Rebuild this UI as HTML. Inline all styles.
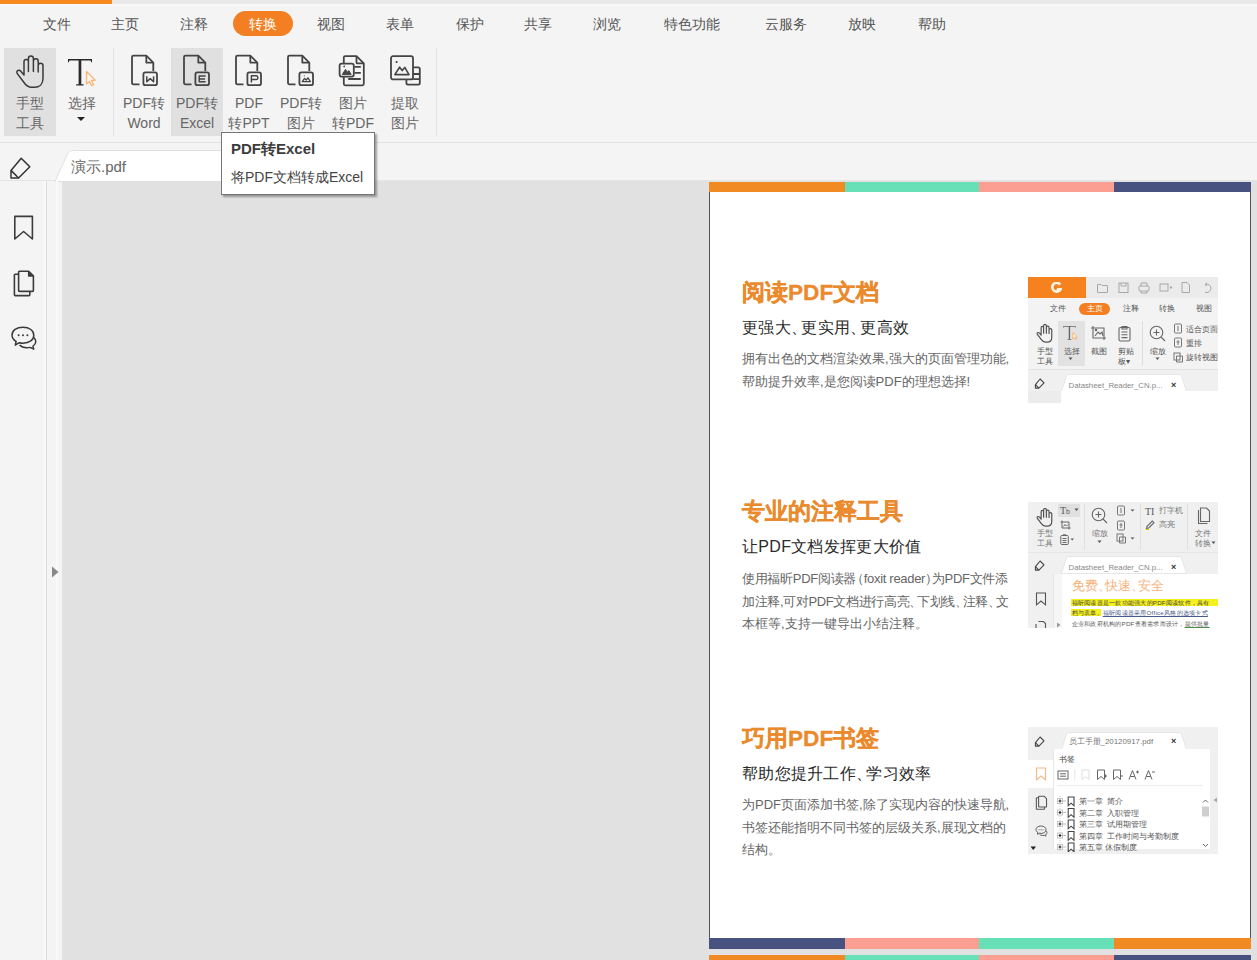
<!DOCTYPE html>
<html><head><meta charset="utf-8">
<style>
*{margin:0;padding:0;box-sizing:border-box}
html,body{width:1257px;height:960px;overflow:hidden;background:#f4f4f4;font-family:"Liberation Sans",sans-serif;color:#444}
.a{position:absolute}
#topstrip{left:0;top:0;width:1257px;height:4px;background:#e8e8e8}
#topband{left:0;top:4px;width:1257px;height:2px;background:#f7f7f7}
#topor{left:0;top:0;width:112px;height:4px;background:#f78a1e}
.menu{top:14.5px;font-size:14.4px;line-height:18px;color:#555;white-space:nowrap}
#pill{left:233px;top:11px;width:60px;height:25px;border-radius:13px;background:#f37f22}
.btn{top:48px;height:88px}
.hl{background:#e0e0e0}
.lbl{font-size:14px;line-height:20px;color:#666;text-align:center;white-space:nowrap}
.sep{width:1px;background:#e2e2e2}
#docarea{left:62px;top:181px;width:1195px;height:779px;background:#e1e1e1}
#page{left:709px;top:182px;width:542px;height:767px;background:#fff;border-left:1px solid #555;border-right:1px solid #555}
.bar{height:10px}
.h1{font-size:22.6px;font-weight:bold;-webkit-text-stroke:0.3px #ea8a2c;color:#ea8a2c;line-height:26px;white-space:nowrap}
.h2{font-size:16px;letter-spacing:0.3px;color:#2a2a2a;line-height:20px;white-space:nowrap}
.mt{font-size:7.5px;line-height:10px;color:#555;white-space:nowrap}
.dn{margin-right:-6px}
.dn2{margin-left:-5px;margin-right:0}
.dn3{margin-right:-6px}
.dn4{margin-right:-5px}
.p{font-size:13px;color:#666;line-height:22.5px;white-space:nowrap}
</style></head><body>
<div class="a" id="topstrip"></div>
<div class="a" id="topband"></div>
<div class="a" id="topor"></div>
<!-- menu -->
<div class="a" id="pill"></div>
<div class="a menu" style="left:43px">文件</div>
<div class="a menu" style="left:111px">主页</div>
<div class="a menu" style="left:180px">注释</div>
<div class="a menu" style="left:249px;color:#fff">转换</div>
<div class="a menu" style="left:317px">视图</div>
<div class="a menu" style="left:386px">表单</div>
<div class="a menu" style="left:456px">保护</div>
<div class="a menu" style="left:524px">共享</div>
<div class="a menu" style="left:593px">浏览</div>
<div class="a menu" style="left:664px">特色功能</div>
<div class="a menu" style="left:765px">云服务</div>
<div class="a menu" style="left:848px">放映</div>
<div class="a menu" style="left:918px">帮助</div>

<!-- ribbon -->
<div class="a btn hl" style="left:4px;width:52px"></div>
<div class="a btn hl" style="left:171px;width:52px"></div>
<div class="a sep" style="left:113px;top:48px;height:88px"></div>
<div class="a sep" style="left:436px;top:48px;height:88px"></div>
<div class="a" style="left:0;top:142px;width:1257px;height:1px;background:#e2e2e2"></div>

<div class="a lbl" style="left:4px;top:93px;width:52px">手型<br>工具</div>
<div class="a lbl" style="left:56px;top:93px;width:52px">选择</div>
<div class="a lbl" style="left:118px;top:93px;width:52px">PDF转<br>Word</div>
<div class="a lbl" style="left:171px;top:93px;width:52px">PDF转<br>Excel</div>
<div class="a lbl" style="left:223px;top:93px;width:52px">PDF<br>转PPT</div>
<div class="a lbl" style="left:275px;top:93px;width:52px">PDF转<br>图片</div>
<div class="a lbl" style="left:327px;top:93px;width:52px">图片<br>转PDF</div>
<div class="a lbl" style="left:379px;top:93px;width:52px">提取<br>图片</div>


<div class="a" style="left:46px;top:181px;width:1px;height:779px;background:#dcdcdc"></div>
<div class="a" style="left:47px;top:181px;width:15px;height:779px;background:#f4f4f4"></div>
<div class="a" id="docarea"></div>
<!-- ribbon icons -->
<svg class="a" style="left:15px;top:55px" width="30" height="34" viewBox="0 0 30 34" fill="none" stroke="#3a3a3a" stroke-width="1.5" stroke-linecap="round" stroke-linejoin="round">
<path d="M9 19.5V6.6a2.2 2.2 0 0 1 4.4 0V16.5M13.4 6.6V3.4a2.5 2.5 0 0 1 5 0V16.5M18.4 6.2a2.4 2.4 0 0 1 4.8 0V17M23.2 10.6a2.4 2.4 0 0 1 4.8 0V23.5C28 29 24.5 32.3 19.5 32.3H16.5C12.8 32.3 11 30.5 9 27.5L2.3 18.6A2.1 2.1 0 0 1 5.6 16L9 20"/>
</svg>
<svg class="a" style="left:66px;top:57px" width="34" height="31" viewBox="0 0 34 31">
<path d="M2 2H26V5.2H25.2L24.6 3.6H15.3V27.3H17.6V28.5H10.2V27.3H12.6V3.6H3.4L2.8 5.2H2Z" fill="#2b2b2b"/>
<path d="M20.5 14.5L20.5 27L23.4 24.4L25.6 28.6L27.6 27.6L25.5 23.5L29.3 23.2Z" fill="#fff6ea" stroke="#f6b77c" stroke-width="1.3" stroke-linejoin="round"/>
</svg>
<svg class="a" style="left:130px;top:54px" width="30" height="33" viewBox="0 0 30 33" fill="none" stroke="#444" stroke-width="1.8" stroke-linejoin="round">
<path d="M9.5 30.3H3.5Q2 30.3 2 28.8V3Q2 1.6 3.5 1.6H16.3L23.3 8.6V17"/><path d="M16.3 1.8V8.6H23.2"/>
<rect x="13.4" y="18.4" width="13.6" height="12.8" rx="2"/>
<path d="M16.8 22.2V27.8L20.2 24.6L23.6 27.8V22.2" stroke-width="1.5"/>
</svg>
<svg class="a" style="left:182px;top:54px" width="30" height="33" viewBox="0 0 30 33" fill="none" stroke="#444" stroke-width="1.8" stroke-linejoin="round">
<path d="M9.5 30.3H3.5Q2 30.3 2 28.8V3Q2 1.6 3.5 1.6H16.3L23.3 8.6V17"/><path d="M16.3 1.8V8.6H23.2"/>
<rect x="13.4" y="18.4" width="13.6" height="12.8" rx="2"/>
<path d="M23.6 22H17.2V27.8H23.6M17.2 24.9H23" stroke-width="1.5"/>
</svg>
<svg class="a" style="left:234px;top:54px" width="30" height="33" viewBox="0 0 30 33" fill="none" stroke="#444" stroke-width="1.8" stroke-linejoin="round">
<path d="M9.5 30.3H3.5Q2 30.3 2 28.8V3Q2 1.6 3.5 1.6H16.3L23.3 8.6V17"/><path d="M16.3 1.8V8.6H23.2"/>
<rect x="13.4" y="18.4" width="13.6" height="12.8" rx="2"/>
<path d="M17.4 28.4V21.8H22.2Q23.8 21.8 23.8 23.5V24Q23.8 25.6 22.2 25.6H17.4" stroke-width="1.5"/>
</svg>
<svg class="a" style="left:286px;top:54px" width="30" height="33" viewBox="0 0 30 33" fill="none" stroke="#444" stroke-width="1.8" stroke-linejoin="round">
<path d="M9.5 30.3H3.5Q2 30.3 2 28.8V3Q2 1.6 3.5 1.6H16.3L23.3 8.6V17"/><path d="M16.3 1.8V8.6H23.2"/>
<rect x="13.4" y="18.4" width="13.6" height="12.8" rx="2"/>
<path d="M16.2 27.6L18.6 24.4L20.2 26L22 23.8L24.4 27.6Z" stroke-width="1.3"/><circle cx="18.3" cy="21.8" r=".6" fill="#4a4a4a" stroke="none"/>
</svg>
<svg class="a" style="left:337px;top:54px" width="32" height="33" viewBox="0 0 32 33" fill="none" stroke="#444" stroke-width="1.8" stroke-linejoin="round">
<path d="M6.8 9.5V3.6Q6.8 2.2 8.2 2.2H19.5L26.8 9.4V29.8Q26.8 31.3 25.4 31.3H8.2Q6.8 31.3 6.8 29.8V22.8"/><path d="M19.5 2.4V8.4Q19.5 9.4 20.5 9.4H26.6"/>
<rect x="2.6" y="9.6" width="14.2" height="13" rx="2"/>
<path d="M17.5 12.8H23.8M17.5 18.8H23.8M11.2 25H23.8"/>
<path d="M5.3 20.4L8.5 15.4L10.4 18.2L11.8 16.6L14.2 20.4Z" fill="#4a4a4a" stroke-width="1"/><circle cx="7.2" cy="12.4" r=".9" fill="#4a4a4a" stroke="none"/>
</svg>
<svg class="a" style="left:388px;top:54px" width="34" height="33" viewBox="0 0 34 33" fill="none" stroke="#444" stroke-width="1.8" stroke-linejoin="round">
<rect x="18.4" y="13.4" width="13.4" height="17.2" rx="1.6"/>
<path d="M25.2 20H31.6M25.2 25.2H31.6"/>
<rect x="3" y="2.2" width="22" height="23.2" rx="2" fill="#f3f3f3"/>
<path d="M6.8 20.6L11.6 13.2L14.2 16.6L16.8 13.4L21 20.6Z" stroke-width="1.6"/><circle cx="8.6" cy="8" r="1.1" fill="#444" stroke="none"/>
</svg>
<svg class="a" style="left:76px;top:116px" width="10" height="6" viewBox="0 0 10 6"><path d="M1 1H9L5 5Z" fill="#222"/></svg>

<!-- tab bar -->
<svg class="a" style="left:9px;top:156px" width="24" height="23" viewBox="0 0 24 23" fill="none" stroke="#333" stroke-width="1.5" stroke-linejoin="round">
<path d="M12.2 2.2L20.8 10.8L9.6 22H2V14.4Z"/><path d="M2 14.4L9.6 22"/>
</svg>
<div class="a" style="left:0;top:180px;width:1257px;height:1px;background:#e4e4e4"></div>
<svg class="a" style="left:54px;top:150px" width="260" height="32" viewBox="0 0 260 32">
<path d="M1 31.5L14 3Q15.5 0.5 18.5 0.5H240Q243 0.5 244.5 3L257 31.5Z" fill="#fff" stroke="#e0e0e0" stroke-width="1"/>
</svg>
<div class="a" style="left:71px;top:157px;font-size:15px;line-height:20px;color:#666;white-space:nowrap">演示.pdf</div>

<!-- sidebar icons -->
<svg class="a" style="left:12px;top:214px" width="24" height="28" viewBox="0 0 24 28" fill="none" stroke="#3c3c3c" stroke-width="1.6" stroke-linejoin="round">
<path d="M2.8 2.4H20.4V25L11.6 17.5L2.8 25Z"/>
</svg>
<svg class="a" style="left:12px;top:269px" width="24" height="28" viewBox="0 0 24 28" fill="none" stroke="#3c3c3c" stroke-width="1.6" stroke-linejoin="round">
<path d="M6.5 5.2H3.2Q2.4 5.2 2.4 6V25.8Q2.4 26.6 3.2 26.6H17Q17.8 26.6 17.8 25.8V22.6"/>
<path d="M7.6 2.2H16.7L21.4 6.9V21.6Q21.4 22.4 20.6 22.4H7.4Q6.6 22.4 6.6 21.6V3Q6.6 2.2 7.4 2.2Z"/><path d="M16.7 2.4V6.9H21.2" fill="#3c3c3c"/>
</svg>
<svg class="a" style="left:10px;top:325px" width="28" height="26" viewBox="0 0 28 26" fill="none" stroke="#3c3c3c" stroke-width="1.5" stroke-linejoin="round">
<path d="M13 2.2C19.5 2.2 23.8 5.6 23.8 10.2C23.8 14.8 19.5 18.2 13 18.2C11.6 18.2 10.3 18 9.2 17.7L5.3 20.2L6.1 16.3C3.4 14.8 2 12.6 2 10.2C2 5.6 6.5 2.2 13 2.2Z"/>
<path d="M23.5 12.3C25 13.5 25.8 15 25.8 16.6C25.8 18.4 24.8 20 23 21.2L23.7 24.2L20.2 22.4C19.1 22.7 17.9 22.8 16.6 22.8C13.6 22.8 11 21.7 9.6 20.1"/>
<circle cx="8.6" cy="10.3" r="1" fill="#3c3c3c" stroke="none"/><circle cx="13" cy="10.3" r="1" fill="#3c3c3c" stroke="none"/><circle cx="17.4" cy="10.3" r="1" fill="#3c3c3c" stroke="none"/>
</svg>
<div class="a" style="left:43px;top:181px;width:3px;height:779px;background:#f8f8f8"></div><div class="a" style="left:56px;top:181px;width:2px;height:779px;background:#f9f9f9"></div>
<svg class="a" style="left:50px;top:565px" width="10" height="14" viewBox="0 0 10 14"><path d="M2 1.5L8.5 7L2 12.5Z" fill="#888"/></svg>

<!-- sidebar -->

<!-- page -->
<div class="a" id="page"></div>
<div class="a bar" style="left:709px;top:182px;width:136px;background:#f28a24"></div>
<div class="a bar" style="left:845px;top:182px;width:134px;background:#67e0b8"></div>
<div class="a bar" style="left:979px;top:182px;width:135px;background:#fa9f92"></div>
<div class="a bar" style="left:1114px;top:182px;width:137px;background:#475281"></div>

<div class="a bar" style="left:709px;top:938px;width:136px;height:11px;background:#475281"></div>
<div class="a bar" style="left:845px;top:938px;width:134px;height:11px;background:#fa9f92"></div>
<div class="a bar" style="left:979px;top:938px;width:135px;height:11px;background:#67e0b8"></div>
<div class="a bar" style="left:1114px;top:938px;width:137px;height:11px;background:#f28a24"></div>

<div class="a" style="left:709px;top:955px;width:542px;height:5px;background:#fff;border-left:1px solid #555;border-right:1px solid #555"></div>
<div class="a bar" style="left:709px;top:955px;width:136px;background:#f28a24"></div>
<div class="a bar" style="left:845px;top:955px;width:134px;background:#67e0b8"></div>
<div class="a bar" style="left:979px;top:955px;width:135px;background:#fa9f92"></div>
<div class="a bar" style="left:1114px;top:955px;width:137px;background:#475281"></div>

<div class="a h1" style="left:742px;top:280px">阅读PDF文档</div>
<div class="a h2" style="left:742px;top:318px">更强大<span class="dn">、</span>更实用<span class="dn">、</span>更高效</div>
<div class="a p" id="p11" style="left:742px;top:348px">拥有出色的文档渲染效果,强大的页面管理功能,</div>
<div class="a p" id="p12" style="left:742px;top:371px">帮助提升效率,是您阅读PDF的理想选择!</div>

<div class="a h1" style="left:742px;top:499px">专业的注释工具</div>
<div class="a h2" style="left:742px;top:537px">让PDF文档发挥更大价值</div>
<div class="a p" id="p21" style="left:742px;top:568px;letter-spacing:-0.3px">使用福昕PDF阅读器<span class="dn2">（</span>foxit reader<span class="dn3">）</span>为PDF文件添</div>
<div class="a p" id="p22" style="left:742px;top:591px;letter-spacing:-0.35px">加注释,可对PDF文档进行高亮<span class="dn4">、</span>下划线<span class="dn4">、</span>注释<span class="dn4">、</span>文</div>
<div class="a p" id="p23" style="left:742px;top:613px">本框等,支持一键导出小结注释。</div>

<div class="a h1" style="left:742px;top:726px">巧用PDF书签</div>
<div class="a h2" style="left:742px;top:764px">帮助您提升工作<span class="dn">、</span>学习效率</div>
<div class="a p" id="p31" style="left:742px;top:794px">为PDF页面添加书签,除了实现内容的快速导航,</div>
<div class="a p" id="p32" style="left:742px;top:817px">书签还能指明不同书签的层级关系,展现文档的</div>
<div class="a p" id="p33" style="left:742px;top:839px">结构。</div>

<!-- mini screenshot 1 -->
<div class="a mini" style="left:1028px;top:277px;width:190px;height:126px;background:#f3f3f3">
 <div class="a" style="left:0;top:0;width:58px;height:21px;background:#f5821f"></div>
 <svg class="a" style="left:23px;top:5px" width="11" height="11" viewBox="0 0 11 11"><path d="M9.2 2.6A4.4 4.4 0 1 0 9.6 7.2H5.6" fill="none" stroke="#fff4e6" stroke-width="2.6"/><circle cx="5.2" cy="5.8" r="1" fill="#c98a50"/></svg>
 <div class="a" style="left:58px;top:0;width:132px;height:21px;background:#ebebeb"></div>
 <svg class="a" style="left:68px;top:4px" width="122" height="13" viewBox="0 0 122 13" fill="none" stroke="#a8a8a8" stroke-width="1">
  <path d="M1.5 3.5H5L6 4.5H11.5V11.5H1.5Z"/><rect x="23" y="2" width="9" height="9.5"/><path d="M25 2V5H30V2"/>
  <rect x="43" y="5" width="10" height="5" rx="1"/><path d="M45 5V2H51V5M45 10V12H51V10"/>
  <rect x="64" y="3" width="8" height="7"/><path d="M74 6L76 6L75 7.5Z" fill="#a8a8a8"/>
  <path d="M86 1.5H91L93.5 4V11.5H86Z"/><path d="M109 3.5A4.2 4.2 0 1 1 109 11.2M109 3.5L111 1.8M109 3.5L111 5.2"/>
 </svg>
 <div class="a" style="left:0;top:21px;width:190px;height:20px;background:#f3f3f3"></div>
 <div class="a" style="left:50.5px;top:25.5px;width:31px;height:12px;border-radius:6px;background:#f37f22"></div>
 <div class="a mt" style="left:22px;top:26.5px">文件</div>
 <div class="a mt" style="left:58.5px;top:26.5px;color:#fff">主页</div>
 <div class="a mt" style="left:94.5px;top:26.5px">注释</div>
 <div class="a mt" style="left:130.5px;top:26.5px">转换</div>
 <div class="a mt" style="left:167.5px;top:26.5px">视图</div>
 <div class="a" style="left:29.5px;top:44px;width:27px;height:45px;background:#e2e2e2"></div>
 <svg class="a" style="left:8px;top:47px" width="17" height="19" viewBox="0 0 30 34" fill="none" stroke="#555" stroke-width="2.2" stroke-linecap="round" stroke-linejoin="round"><path d="M9 19.5V6.6a2.2 2.2 0 0 1 4.4 0V16.5M13.4 6.6V3.4a2.5 2.5 0 0 1 5 0V16.5M18.4 6.2a2.4 2.4 0 0 1 4.8 0V17M23.2 10.6a2.4 2.4 0 0 1 4.8 0V23.5C28 29 24.5 32.3 19.5 32.3H16.5C12.8 32.3 11 30.5 9 27.5L2.3 18.6A2.1 2.1 0 0 1 5.6 16L9 20"/></svg>
 <svg class="a" style="left:34px;top:48px" width="18" height="16" viewBox="0 0 34 31"><path d="M2 2H26V5.2H25.2L24.6 3.6H15.3V27.3H17.6V28.5H10.2V27.3H12.6V3.6H3.4L2.8 5.2H2Z" fill="#666"/><path d="M20.5 14.5L20.5 27L23.4 24.4L25.6 28.6L27.6 27.6L25.5 23.5L29.3 23.2Z" fill="#fff3e3" stroke="#f4a967" stroke-width="1.6"/></svg>
 <svg class="a" style="left:62px;top:48px" width="17" height="16" viewBox="0 0 17 16" fill="none" stroke="#666" stroke-width="1.1"><path d="M3 1V13H16M1 3H14V15"/><path d="M5 11L8 7L10 9L12 7L13 11" /><circle cx="6" cy="5" r=".7" fill="#666"/></svg>
 <svg class="a" style="left:90px;top:48px" width="13" height="17" viewBox="0 0 13 17" fill="none" stroke="#666" stroke-width="1.1"><rect x="1" y="2.5" width="11" height="13.5" rx="1.5"/><path d="M4 1.5H9V4H4Z"/><path d="M3.5 7H9.5M3.5 9.8H9.5M3.5 12.6H9.5"/></svg>
 <div class="a" style="left:113.5px;top:44px;width:1px;height:45px;background:#dedede"></div>
 <svg class="a" style="left:121px;top:48px" width="17" height="17" viewBox="0 0 17 17" fill="none" stroke="#666" stroke-width="1.1"><circle cx="7.5" cy="7.5" r="6.3"/><path d="M7.5 4.5V10.5M4.5 7.5H10.5M12 12L16 16"/></svg>
 <div class="a mt" style="left:9px;top:69.5px;line-height:10px;color:#555">手型<br>工具</div>
 <div class="a mt" style="left:35.5px;top:69.5px;line-height:10px;color:#555">选择</div>
 <div class="a mt" style="left:62.5px;top:69.5px;line-height:10px;color:#555">截图</div>
 <div class="a mt" style="left:89.5px;top:69.5px;line-height:10px;color:#555">剪贴<br>板▾</div>
 <div class="a mt" style="left:121.5px;top:69.5px;line-height:10px;color:#555">缩放</div>
 <svg class="a" style="left:40px;top:80px" width="60" height="4" viewBox="0 0 60 4"><path d="M0.5 0.5H4.5L2.5 3Z" fill="#555"/></svg>
 <svg class="a" style="left:127px;top:80px" width="6" height="4" viewBox="0 0 6 4"><path d="M0.5 0.5H4.5L2.5 3Z" fill="#555"/></svg>
 <svg class="a" style="left:145px;top:46px" width="11" height="40" viewBox="0 0 11 40" fill="none" stroke="#777" stroke-width="1"><rect x="1.5" y="1" width="7" height="9" rx="1"/><path d="M5 3V8"/><rect x="1.5" y="15" width="7" height="9" rx="1"/><path d="M5 17V22M3.5 19H6.5"/><rect x="1" y="30" width="6" height="7"/><path d="M3.5 33H9.5V39H3.5Z"/></svg>
 <div class="a mt" style="left:158px;top:46px;line-height:14.2px;color:#555">适合页面<br>重排<br>旋转视图</div>
 <div class="a" style="left:0;top:92px;width:190px;height:1px;background:#e2e2e2"></div>
 <div class="a" style="left:0;top:93px;width:190px;height:21px;background:#f0f0f0"></div>
 <svg class="a" style="left:6px;top:101px" width="12" height="11" viewBox="0 0 24 24" fill="none" stroke="#444" stroke-width="2.4" stroke-linejoin="round"><path d="M12.2 2.2L20.8 10.8L9.6 22H2V14.4Z"/><path d="M2 14.4L9.6 22"/></svg>
 <svg class="a" style="left:33px;top:97px" width="126" height="18" viewBox="0 0 126 18"><path d="M0.5 17.5L5.5 2Q6 0.5 8 0.5H118Q120 0.5 120.5 2L125.5 17.5Z" fill="#fff" stroke="#e6e6e6"/></svg>
 <div class="a mt" style="left:40.5px;top:104px;font-size:7.8px;color:#888">Datasheet_Reader_CN.p...</div>
 <div class="a" style="left:143px;top:102.5px;font-size:9px;line-height:10px;color:#333;font-weight:bold">×</div>
 <div class="a" style="left:0;top:114px;width:33px;height:12px;background:#ececec"></div>
 <div class="a" style="left:33px;top:114px;width:157px;height:12px;background:#fff"></div>
</div>

<!-- mini screenshot 2 -->
<div class="a mini" style="left:1028px;top:502px;width:190px;height:126px;background:#f0f0f0;overflow:hidden">
 <svg class="a" style="left:8px;top:6px" width="17" height="19" viewBox="0 0 30 34" fill="none" stroke="#555" stroke-width="2.2" stroke-linecap="round" stroke-linejoin="round"><path d="M9 19.5V6.6a2.2 2.2 0 0 1 4.4 0V16.5M13.4 6.6V3.4a2.5 2.5 0 0 1 5 0V16.5M18.4 6.2a2.4 2.4 0 0 1 4.8 0V17M23.2 10.6a2.4 2.4 0 0 1 4.8 0V23.5C28 29 24.5 32.3 19.5 32.3H16.5C12.8 32.3 11 30.5 9 27.5L2.3 18.6A2.1 2.1 0 0 1 5.6 16L9 20"/></svg>
 <div class="a mt" style="left:9px;top:26.5px;color:#777">手型<br>工具</div>
 <div class="a" style="left:29.5px;top:2px;width:22.5px;height:12.5px;background:#e0e0e0"></div>
 <div class="a" style="left:32px;top:2.5px;font-size:10px;line-height:11px;color:#555;font-family:'Liberation Serif',serif">T<span style="font-size:7px;font-family:'Liberation Sans',sans-serif">b</span></div>
 <svg class="a" style="left:46px;top:6px" width="6" height="4"><path d="M0.5 0.5H4.5L2.5 3Z" fill="#555"/></svg>
 <svg class="a" style="left:32px;top:17.5px" width="11" height="10" viewBox="0 0 11 10" fill="none" stroke="#666" stroke-width="1"><path d="M2 0.5V8H10.5M0.5 2H9V9.5"/><path d="M3.5 6.5L5 4.5L6.5 6L8 4.5"/></svg>
 <svg class="a" style="left:32px;top:32px" width="15" height="11" viewBox="0 0 15 11" fill="none" stroke="#666" stroke-width="1"><rect x="0.8" y="1.5" width="7.5" height="9" rx="1"/><path d="M3 0.8H6M2.5 4.5H6.5M2.5 6.5H6.5M2.5 8.5H6.5"/><path d="M10.5 4.5H14L12.25 6.5Z" fill="#555" stroke="none"/></svg>
 <div class="a" style="left:55.5px;top:2px;width:1px;height:46px;background:#e0e0e0"></div>
 <svg class="a" style="left:63px;top:5px" width="17" height="17" viewBox="0 0 17 17" fill="none" stroke="#666" stroke-width="1.1"><circle cx="7.5" cy="7.5" r="6.3"/><path d="M7.5 4.5V10.5M4.5 7.5H10.5M12 12L16 16"/></svg>
 <div class="a mt" style="left:63.5px;top:26.5px;color:#777">缩放</div>
 <svg class="a" style="left:69px;top:37.5px" width="6" height="4"><path d="M0.5 0.5H4.5L2.5 3Z" fill="#555"/></svg>
 <svg class="a" style="left:88px;top:3px" width="22" height="41" viewBox="0 0 22 41" fill="none" stroke="#777" stroke-width="1"><rect x="1.5" y="1" width="7" height="9" rx="1"/><path d="M5 3V8"/><rect x="1.5" y="16" width="7" height="9" rx="1"/><path d="M5 18V23M3.5 20H6.5"/><rect x="1" y="29" width="6" height="7"/><path d="M3.5 32H9.5V38H3.5Z"/><path d="M14.5 4.5H18.5L16.5 6.5Z M14.5 32.5H18.5L16.5 34.5Z" fill="#555" stroke="none"/></svg>
 <div class="a" style="left:111.5px;top:2px;width:1px;height:46px;background:#e0e0e0"></div>
 <div class="a" style="left:117px;top:3.5px;font-size:10px;line-height:11px;color:#555;font-family:'Liberation Serif',serif">TI</div>
 <div class="a mt" style="left:131px;top:4px;color:#777">打字机</div>
 <svg class="a" style="left:117px;top:18px" width="11" height="10" viewBox="0 0 11 10" fill="none" stroke="#666" stroke-width="1.1"><path d="M1.5 8.5L2 6.3L7.3 1L9 2.7L3.7 8Z"/><path d="M0.5 9.5H4" stroke="#f7c600"/></svg>
 <div class="a mt" style="left:131px;top:18px;color:#777">高亮</div>
 <div class="a" style="left:159px;top:2px;width:1px;height:46px;background:#e0e0e0"></div>
 <svg class="a" style="left:167px;top:5px" width="16" height="18" viewBox="0 0 16 18" fill="none" stroke="#666" stroke-width="1.1"><path d="M3.5 3V16.5H12.5"/><path d="M5.5 1H11.5L14.5 4V14.5H5.5Z"/></svg>
 <div class="a mt" style="left:167px;top:26.5px;color:#777">文件<br>转换</div>
 <svg class="a" style="left:183px;top:39px" width="6" height="4"><path d="M0.5 0.5H4.5L2.5 3Z" fill="#555"/></svg>
 <div class="a" style="left:0;top:50px;width:190px;height:1px;background:#e6e6e6"></div>
 <svg class="a" style="left:6px;top:58px" width="12" height="11" viewBox="0 0 24 24" fill="none" stroke="#444" stroke-width="2.4" stroke-linejoin="round"><path d="M12.2 2.2L20.8 10.8L9.6 22H2V14.4Z"/><path d="M2 14.4L9.6 22"/></svg>
 <svg class="a" style="left:33px;top:54px" width="126" height="18" viewBox="0 0 126 18"><path d="M0.5 17.5L5.5 2Q6 0.5 8 0.5H118Q120 0.5 120.5 2L125.5 17.5Z" fill="#fff" stroke="#e6e6e6"/></svg>
 <div class="a mt" style="left:40.5px;top:60.5px;font-size:7.8px;color:#888">Datasheet_Reader_CN.p...</div>
 <div class="a" style="left:143px;top:59.5px;font-size:9px;line-height:10px;color:#333;font-weight:bold">×</div>
 <div class="a" style="left:24.5px;top:71.5px;width:9.5px;height:55px;background:#f6f6f6;border-left:1px solid #e6e6e6"></div>
 <div class="a" style="left:34px;top:71.5px;width:156px;height:55px;background:#fff"></div>
 <svg class="a" style="left:7px;top:90px" width="12" height="14" viewBox="0 0 12 14" fill="none" stroke="#555" stroke-width="1.1"><path d="M1.5 1H10.5V12.8L6 9L1.5 12.8Z"/></svg>
 <svg class="a" style="left:7px;top:118px" width="12" height="10" viewBox="0 0 12 10" fill="none" stroke="#555" stroke-width="1.1"><path d="M1 4V10M3.5 1.5H8.5L10.5 3.5V10"/></svg>
 <svg class="a" style="left:27.5px;top:120px" width="5" height="6"><path d="M1 0.5L4.5 3L1 5.5Z" fill="#999"/></svg>
 <div class="a" id="mf" style="left:43.5px;top:75px;font-size:13px;line-height:17px;color:#f6b27a;white-space:nowrap">免费<span style="margin-right:-6px">、</span>快速<span style="margin-right:-6px">、</span>安全</div>
 <div class="a" style="left:43px;top:96.5px;width:147px;height:7.5px;background:#f5f01e"></div>
 <div class="a" style="left:43px;top:107px;width:30px;height:7px;background:#f5f01e"></div>
 <div class="a" style="left:43.5px;top:95.5px;font-size:6.2px;letter-spacing:0.25px;line-height:10px;color:#444;white-space:nowrap">福昕阅读器是一款功能强大的PDF阅读软件，具有</div>
 <div class="a" style="left:43.5px;top:106px;font-size:6.2px;letter-spacing:0.25px;line-height:10px;color:#444;white-space:nowrap">档与表单。<span style="color:#4a5a8a;text-decoration:underline">福昕阅读器采用Office风格的选项卡式</span></div>
 <div class="a" style="left:43.5px;top:117px;font-size:6.2px;letter-spacing:0.25px;line-height:10px;color:#555;white-space:nowrap">企业和政府机构的PDF查看需求而设计，<span style="text-decoration:underline;text-decoration-color:#4a8a4a">提供批量</span></div>
</div>

<!-- mini screenshot 3 -->
<div class="a mini" style="left:1028px;top:727px;width:190px;height:127px;background:#f0f0f0;overflow:hidden">
 <svg class="a" style="left:6px;top:9px" width="12" height="11" viewBox="0 0 24 24" fill="none" stroke="#444" stroke-width="2.4" stroke-linejoin="round"><path d="M12.2 2.2L20.8 10.8L9.6 22H2V14.4Z"/><path d="M2 14.4L9.6 22"/></svg>
 <svg class="a" style="left:33px;top:5px" width="126" height="18" viewBox="0 0 126 18"><path d="M0.5 17.5L5.5 2Q6 0.5 8 0.5H118Q120 0.5 120.5 2L125.5 17.5Z" fill="#fff" stroke="#e6e6e6"/></svg>
 <div class="a mt" style="left:40.5px;top:9.5px;font-size:7.9px;color:#777">员工手册_20120917.pdf</div>
 <div class="a" style="left:143px;top:9px;font-size:9px;line-height:10px;color:#333;font-weight:bold">×</div>
 <div class="a" style="left:0;top:33px;width:25px;height:28px;background:#fff"></div>
 <svg class="a" style="left:7px;top:39.5px" width="12" height="14" viewBox="0 0 12 14" fill="none" stroke="#f2b98a" stroke-width="1.2"><path d="M1.5 1H10.5V12.8L6 9L1.5 12.8Z"/></svg>
 <svg class="a" style="left:6.5px;top:68px" width="13" height="15" viewBox="0 0 24 28" fill="none" stroke="#555" stroke-width="2" stroke-linejoin="round"><path d="M6.5 5.2H3.2Q2.4 5.2 2.4 6V25.8Q2.4 26.6 3.2 26.6H17Q17.8 26.6 17.8 25.8V22.6"/><path d="M7.6 2.2H16.7L21.4 6.9V21.6Q21.4 22.4 20.6 22.4H7.4Q6.6 22.4 6.6 21.6V3Q6.6 2.2 7.4 2.2Z"/></svg>
 <svg class="a" style="left:6.5px;top:98px" width="13" height="12" viewBox="0 0 28 26" fill="none" stroke="#555" stroke-width="2" stroke-linejoin="round"><path d="M13 2.2C19.5 2.2 23.8 5.6 23.8 10.2C23.8 14.8 19.5 18.2 13 18.2C11.6 18.2 10.3 18 9.2 17.7L5.3 20.2L6.1 16.3C3.4 14.8 2 12.6 2 10.2C2 5.6 6.5 2.2 13 2.2Z"/><path d="M23.5 12.3C25 13.5 25.8 15 25.8 16.6C25.8 18.4 24.8 20 23 21.2L23.7 24.2L20.2 22.4C19.1 22.7 17.9 22.8 16.6 22.8C13.6 22.8 11 21.7 9.6 20.1"/><circle cx="8.6" cy="10.3" r="1.3" fill="#555" stroke="none"/><circle cx="13" cy="10.3" r="1.3" fill="#555" stroke="none"/><circle cx="17.4" cy="10.3" r="1.3" fill="#555" stroke="none"/></svg>
 <svg class="a" style="left:2px;top:118.5px" width="7" height="5"><path d="M0.5 0.5H6L3.25 4Z" fill="#222"/></svg>
 <div class="a" style="left:25px;top:22px;width:157px;height:100px;background:#fff;border-left:1px solid #e8e8e8"></div>
 <div class="a mt" style="left:30.5px;top:28px;color:#444">书签</div>
 <svg class="a" style="left:29px;top:42px" width="130" height="12" viewBox="0 0 130 12" fill="none" stroke="#666" stroke-width="1">
  <rect x="1" y="2" width="10" height="8"/><path d="M3 4.8H9M3 7.2H9"/>
  <path d="M17.8 0.5V11.5" stroke="#e6e6e6"/>
  <path d="M25 1H32V10.5L28.5 7.5L25 10.5Z" stroke="#ddd"/>
  <path d="M40.5 1H47.5V10.5L44 7.5L40.5 10.5Z"/><path d="M47 7H50M48.5 5.5V8.5"/>
  <path d="M56.5 1H63.5V10.5L60 7.5L56.5 10.5Z"/><path d="M63 7H66"/>
  <path d="M72 10.5L75.5 1.5L79 10.5M73.3 7.5H77.7M79 3H82M80.5 1.5V4.5"/>
  <path d="M88 10.5L91.5 1.5L95 10.5M89.3 7.5H93.7M95 3H98"/>
 </svg>
 <div class="a" style="left:29px;top:58px;width:146px;height:1px;background:#ececec"></div>
 <svg class="a" style="left:28px;top:69px" width="24" height="56" viewBox="0 0 24 56" fill="none">
 <path d="M4 0V56" stroke="#ccc" stroke-dasharray="1 1"/>
 <g transform="translate(0 0)"><rect x="1.5" y="2.5" width="5" height="5" fill="#fff" stroke="#c4c4c4"/><path d="M2.6 5H5.4M4 3.6V6.4" stroke="#222" stroke-width="1.1"/><path d="M6.5 5H10" stroke="#bbb"/><path d="M12.2 1H18V9.8L15.1 7.2L12.2 9.8Z" stroke="#444" stroke-width="1.1"/></g>
 <g transform="translate(0 11.5)"><rect x="1.5" y="2.5" width="5" height="5" fill="#fff" stroke="#c4c4c4"/><path d="M2.6 5H5.4M4 3.6V6.4" stroke="#222" stroke-width="1.1"/><path d="M6.5 5H10" stroke="#bbb"/><path d="M12.2 1H18V9.8L15.1 7.2L12.2 9.8Z" stroke="#444" stroke-width="1.1"/></g>
 <g transform="translate(0 23)"><rect x="1.5" y="2.5" width="5" height="5" fill="#fff" stroke="#c4c4c4"/><path d="M2.6 5H5.4M4 3.6V6.4" stroke="#222" stroke-width="1.1"/><path d="M6.5 5H10" stroke="#bbb"/><path d="M12.2 1H18V9.8L15.1 7.2L12.2 9.8Z" stroke="#444" stroke-width="1.1"/></g>
 <g transform="translate(0 34.5)"><rect x="1.5" y="2.5" width="5" height="5" fill="#fff" stroke="#c4c4c4"/><path d="M2.6 5H5.4M4 3.6V6.4" stroke="#222" stroke-width="1.1"/><path d="M6.5 5H10" stroke="#bbb"/><path d="M12.2 1H18V9.8L15.1 7.2L12.2 9.8Z" stroke="#444" stroke-width="1.1"/></g>
 <g transform="translate(0 46)"><rect x="1.5" y="2.5" width="5" height="5" fill="#fff" stroke="#c4c4c4"/><path d="M2.6 5H5.4M4 3.6V6.4" stroke="#222" stroke-width="1.1"/><path d="M6.5 5H10" stroke="#bbb"/><path d="M12.2 1H18V9.8L15.1 7.2L12.2 9.8Z" stroke="#444" stroke-width="1.1"/></g>
</svg>
 <div class="a mt" style="left:51px;top:69px;line-height:11.6px;color:#555;font-size:7.9px">第一章&nbsp;&nbsp;简介<br>第二章&nbsp;&nbsp;入职管理<br>第三章&nbsp;&nbsp;试用期管理<br>第四章&nbsp;&nbsp;工作时间与考勤制度<br>第五章&nbsp;休假制度</div>
 <div class="a" style="left:172px;top:70px;width:10px;height:52px;background:#fff"></div>
 <svg class="a" style="left:172.5px;top:69.5px" width="9" height="52" viewBox="0 0 9 52" fill="none" stroke="#666" stroke-width="1"><path d="M2 5.5L4.5 3L7 5.5M2 47L4.5 49.5L7 47"/><rect x="1" y="9.5" width="7" height="10" fill="#cfcfcf" stroke="none"/></svg>
 <svg class="a" style="left:185px;top:70px" width="5" height="6"><path d="M4 0.5L0.5 3L4 5.5Z" fill="#aaa"/></svg>
</div>

<!-- tooltip -->
<div class="a" style="left:221px;top:132px;width:154px;height:63px;background:#fff;border:1px solid #767676;box-shadow:2px 2px 2px rgba(0,0,0,.35)">
 <div class="a" style="left:9px;top:6px;font-size:15px;font-weight:bold;color:#3c3c3c;line-height:20px;white-space:nowrap">PDF转Excel</div>
 <div class="a" style="left:9px;top:34px;font-size:14px;color:#444;line-height:20px;white-space:nowrap">将PDF文档转成Excel</div>
</div>
</body></html>
